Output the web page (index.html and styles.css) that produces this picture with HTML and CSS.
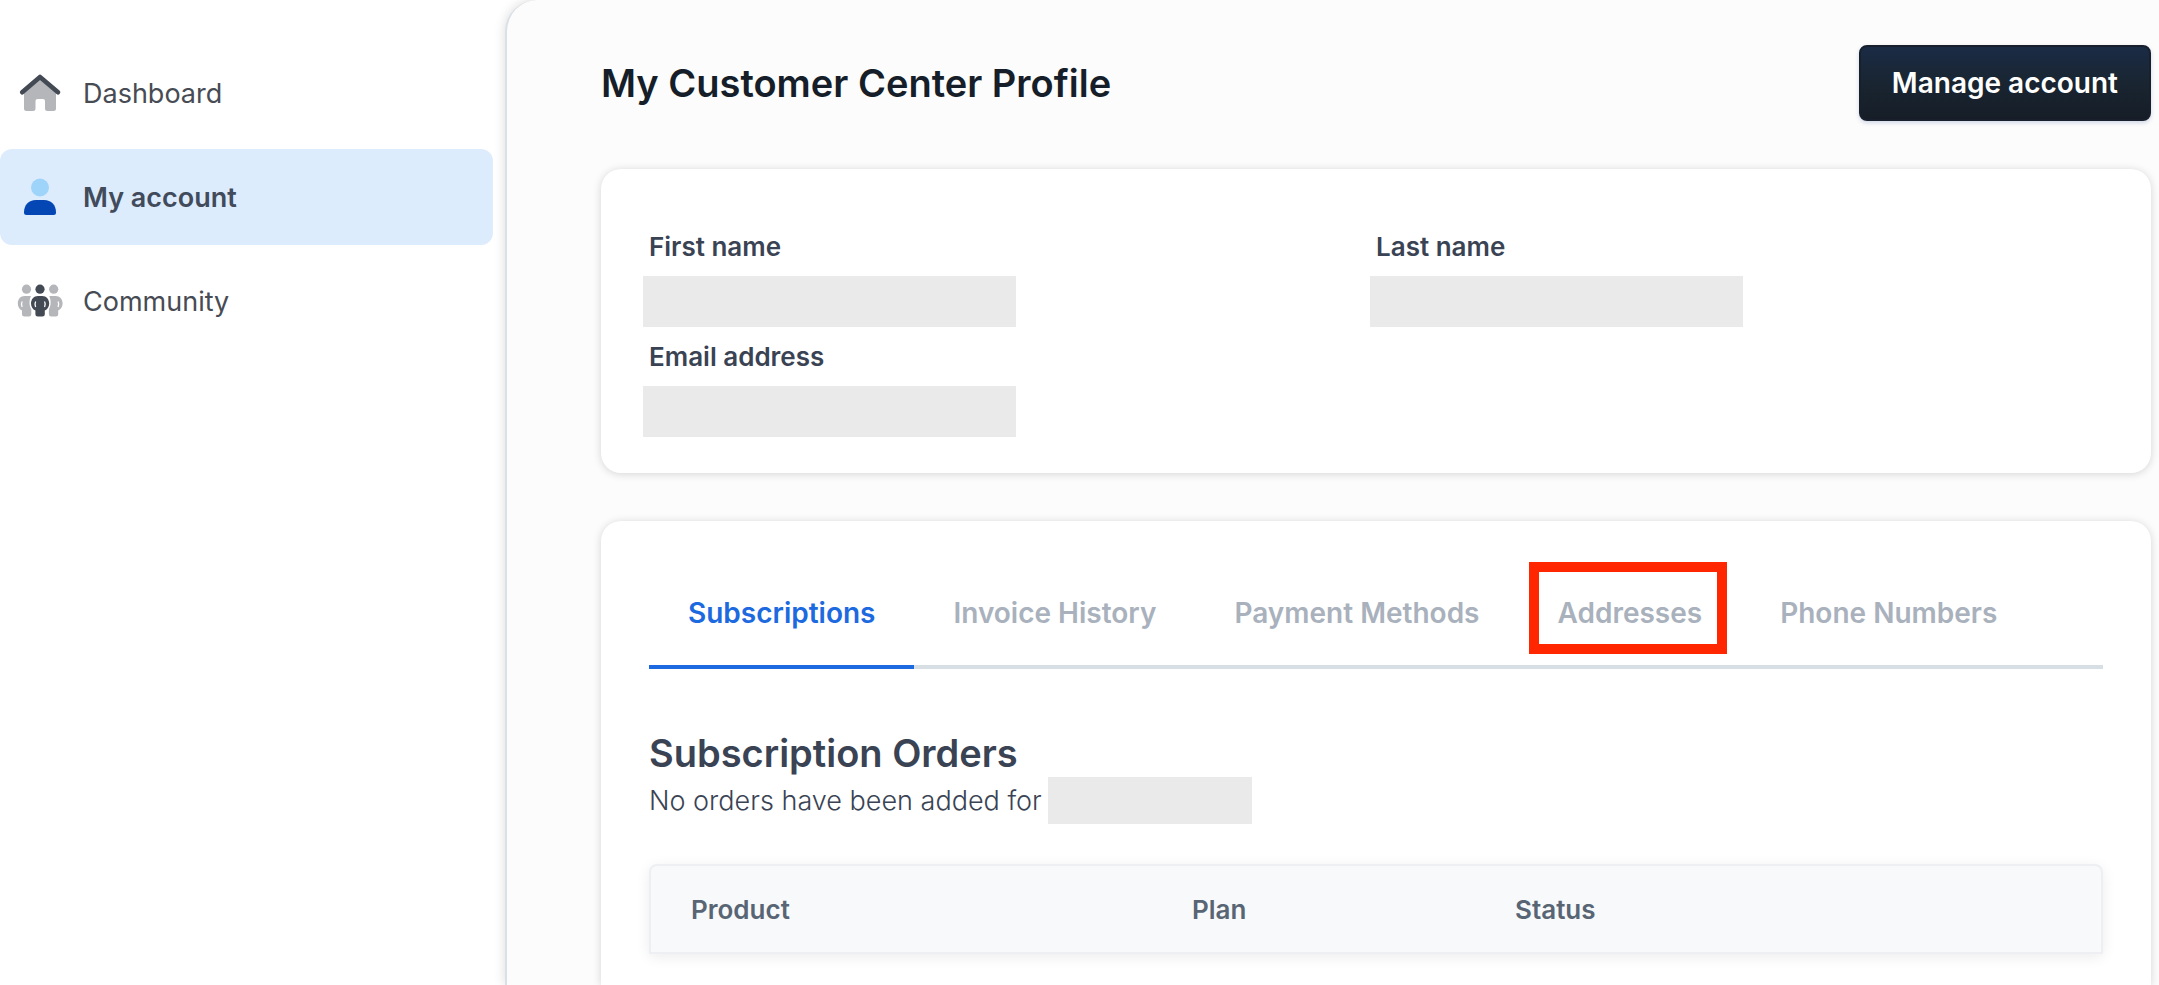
FILE: index.html
```html
<!DOCTYPE html>
<html lang="en">
<head>
  <meta charset="UTF-8" />
  <meta name="viewport" content="width=device-width, initial-scale=1.0" />
  <title>My Customer Center Profile</title>
  <link rel="stylesheet" href="styles.css">
</head>
<body>
  <nav class="sidebar">
    <a class="nav-item" href="#">
      <svg class="nav-icon" viewBox="0 0 48 48" aria-hidden="true">
        <path fill="#b5b6ba" d="M24 8 L40 22 V39.500 Q40 42 37.500 42 H31.500 Q29 42 29 39.500 V32 Q29 30 27 30 H21.500 Q19.500 30 19.500 32 V39.500 Q19.500 42 17 42 H10.500 Q8 42 8 39.500 V22 Z"/>
        <path fill="none" stroke="#434a54" stroke-width="4.600" stroke-linecap="round" stroke-linejoin="round" d="M6.200 23.200 L24 8 L42 23.200"/>
      </svg>
      <span>Dashboard</span>
    </a>
    <a class="nav-item active" href="#" aria-current="page">
      <svg class="nav-icon" viewBox="0 0 48 48" aria-hidden="true">
        <circle cx="24" cy="14.500" r="9" fill="#9ed3fa"/>
        <path fill="#0346b4" d="M20 27 H28 C35.500 27 40 32 40 39.500 Q40 42 37.500 42 H10.500 Q8 42 8 39.500 C8 32 12.500 27 20 27 Z"/>
      </svg>
      <span>My account</span>
    </a>
    <a class="nav-item" href="#">
      <svg class="nav-icon" viewBox="0 0 48 48" aria-hidden="true">
        <g fill="#b5b6ba">
          <circle cx="10.500" cy="12.200" r="4.600"/>
          <circle cx="37.700" cy="12.200" r="4.600"/>
          <path d="M8.500 19 H15 C13 23 13 29 15.300 32 V37 Q15.300 39.500 13 39.500 H8.500 Q6 39.500 6 37 V33.500 C3 32 1.800 29 1.800 26.500 C1.800 22 4.500 19 8.500 19 Z"/>
          <path d="M39.700 19 H33.200 C35.200 23 35.200 29 32.900 32 V37 Q32.900 39.500 35.200 39.500 H39.700 Q42.200 39.500 42.200 37 V33.500 C45.200 32 46.600 29 46.600 26.500 C46.600 22 43.700 19 39.700 19 Z"/>
        </g>
        <g fill="#434a54">
          <circle cx="24" cy="12.200" r="4.600"/>
          <path d="M22 19 H26.200 C30.500 19 33.200 22.500 33.200 26.500 C33.200 29.500 31.500 32.500 28.800 33.500 V37 Q28.800 39.500 26.300 39.500 H21.900 Q19.400 39.500 19.400 37 V33.500 C16.700 32.500 15 29.500 15 26.500 C15 22.500 17.700 19 22 19 Z"/>
        </g>
        <g fill="none" stroke="#fff" stroke-width="1.300" stroke-linecap="round">
          <path d="M19.500 25 Q18.500 27 19.500 29.500"/>
          <path d="M28.700 25 Q29.700 27 28.700 29.500"/>
          <path d="M6 25 Q5 27 6 29.500"/>
          <path d="M42.200 25 Q43.200 27 42.200 29.500"/>
        </g>
      </svg>
      <span>Community</span>
    </a>
  </nav>

  <main class="content">
    <header class="page-header">
      <h1>My Customer Center Profile</h1>
      <button type="button" class="manage-btn">Manage account</button>
    </header>

    <section class="card profile">
      <dl class="fields">
        <div class="field">
          <dt>First name</dt>
          <dd class="redacted"></dd>
        </div>
        <div class="field">
          <dt>Last name</dt>
          <dd class="redacted"></dd>
        </div>
        <div class="field">
          <dt>Email address</dt>
          <dd class="redacted"></dd>
        </div>
      </dl>
    </section>

    <section class="card orders">
      <div class="tabs" role="tablist">
        <button type="button" class="tab selected" role="tab" aria-selected="true">Subscriptions</button>
        <button type="button" class="tab" role="tab">Invoice History</button>
        <button type="button" class="tab" role="tab">Payment Methods</button>
        <button type="button" class="tab highlight" role="tab">Addresses</button>
        <button type="button" class="tab" role="tab">Phone Numbers</button>
      </div>

      <h2>Subscription Orders</h2>
      <p class="empty-note">No orders have been added for <span class="redacted name"></span></p>

      <table class="orders-table">
        <thead>
          <tr>
            <th class="col-product">Product</th>
            <th class="col-plan">Plan</th>
            <th>Status</th>
          </tr>
        </thead>
      </table>
    </section>
  </main>
</body>
</html>
```
FILE: styles.css
```css
* {
  box-sizing: border-box;
}
body {
  margin: 0;
  display: flex;
  height: 100vh;
  overflow: hidden;
  background: #fff;
  color: #3a4354;
  font-family: Inter, "Liberation Sans", sans-serif;
  font-size: 27px;
}
h1, h2, p, dl, dd {
  margin: 0;
}
button {
  font-family: inherit;
  font-size: 28px;
  font-weight: 600;
  cursor: pointer;
}

/* sidebar */
.sidebar {
  flex: 0 0 505px;
  display: flex;
  flex-direction: column;
  gap: 8px;
  padding: 45px 12px 0 0;
}
.nav-item {
  display: flex;
  align-items: center;
  gap: 19px;
  height: 96px;
  padding-left: 16px;
  border-radius: 12px;
  color: #474b54;
  text-decoration: none;
}
.nav-item.active {
  background: #ddecfd;
  color: #414b5b;
  font-weight: 600;
}
.nav-icon {
  width: 48px;
  height: 48px;
}

/* main panel */
.content {
  flex: 1;
  min-width: 0;
  display: flex;
  flex-direction: column;
  padding: 45px 8px 0 94px;
  background: #fcfcfc;
  border-left: 2px solid #d9e0e6;
  border-top-left-radius: 32px;
  box-shadow: 0 0 12px rgba(0, 0, 0, 0.15);
}
.page-header {
  display: flex;
  align-items: center;
  justify-content: space-between;
  margin-bottom: 48px;
}
h1, h2 {
  font-size: 38px;
  font-weight: 600;
  line-height: 48px;
}
h1 {
  color: #151e29;
}
.manage-btn {
  height: 76px;
  padding: 0 31px;
  border: 2px solid #17202c;
  border-radius: 8px;
  background: linear-gradient(#1a2b45, #192531 50%, #161d27);
  box-shadow: 0 2px 4px rgba(40, 70, 150, 0.2);
  color: #fff;
}
.card {
  background: #fff;
  border-radius: 20px;
  box-shadow: 0 1px 8px rgba(0, 0, 0, 0.16);
}

/* profile card */
.profile {
  margin-bottom: 48px;
  padding: 59px 48px 36px;
}
.fields {
  display: grid;
  grid-template-columns: 1fr 1fr;
  gap: 11px 0;
}
.field dt {
  margin-bottom: 10px;
  font-size: 26px;
  font-weight: 600;
  line-height: 38px;
}
.redacted {
  background: #eaeaea;
}
.field .redacted {
  width: 373px;
  height: 51px;
  margin-left: -6px;
}

/* orders card */
.orders {
  flex: 1;
  padding: 48px 48px 0;
  border-radius: 20px 20px 0 0;
}
.tabs {
  display: flex;
  margin-bottom: 60px;
  box-shadow: inset 0 -4px #d8dfe4;
}
.tab {
  position: relative;
  height: 100px;
  padding: 0 39px 8px;
  border: 0;
  border-bottom: 4px solid transparent;
  background: none;
  color: #a9b1bd;
}
.tab.selected {
  border-color: #1c69e0;
  color: #1c69e0;
}
.tab.highlight::after {
  content: "";
  position: absolute;
  inset: -7px 14px 11px 10px;
  border: 10px solid #ff2600;
}
.empty-note {
  display: flex;
  align-items: center;
  gap: 6px;
  height: 47px;
  font-weight: 300;
}
.redacted.name {
  width: 204px;
  height: 47px;
}
.orders-table {
  width: 100%;
  height: 90px;
  margin-top: 40px;
  border: 2px solid #edeff2;
  border-radius: 8px 8px 0 0;
  border-spacing: 0;
  background: #f7f9fb;
  box-shadow: 0 3px 14px rgba(0, 0, 0, 0.08);
}
.orders-table th {
  padding: 0 40px;
  color: #586574;
  font-size: 26px;
  font-weight: 600;
  text-align: left;
}
.col-product {
  width: 501px;
}
.col-plan {
  width: 323px;
}
```
